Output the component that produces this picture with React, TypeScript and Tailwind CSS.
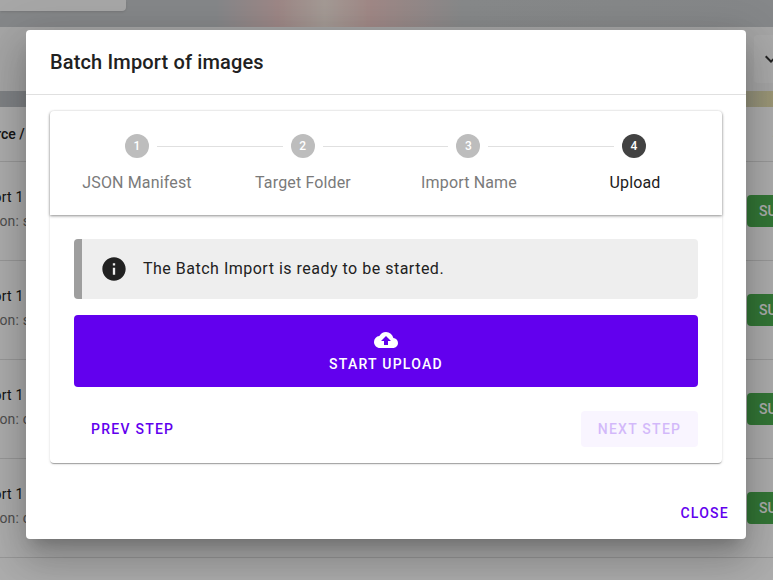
import { MdCloudUpload, MdInfo, MdKeyboardArrowDown } from "react-icons/md";

const STEPS = ["JSON Manifest", "Target Folder", "Import Name", "Upload"];
const ROWS = ["smart", "smart", "coco", "coco"];

function BackgroundPage() {
  return (
    <div className="flex h-[580px] flex-col overflow-hidden bg-white font-[Roboto,sans-serif]">
      <div className="h-[27px] shrink-0 bg-[linear-gradient(90deg,#c5c8ca_0%,#c5c8cb_28%,#e8c8c6_36%,#f2e4dc_42%,#ecc9c6_48%,#c7cacc_60%,#c5c8ca_100%)]">
        <div className="h-[11px] w-[126px] rounded-br bg-[#f7f7f7] shadow" />
      </div>
      <div className="flex h-[64px] shrink-0 items-center justify-end bg-[#f3f3f3] pr-0">
        <div className="flex h-[48px] w-[19px] items-center rounded-l bg-[#fafafa]">
          <MdKeyboardArrowDown className="ml-[5px] shrink-0 text-[24px] text-[#333]" />
        </div>
      </div>
      <div className="h-[16px] shrink-0 bg-[linear-gradient(90deg,#bcc0c4_0%,#c0c4c8_90%,#e6dfae_100%)]" />
      <div className="flex h-[55px] shrink-0 items-center justify-between border-b border-[#e0e0e0] text-sm font-medium text-[#212121]">
        <span className="ml-[-28px]">Source / Name</span>
        <span className="mr-[-40px]">Status</span>
      </div>
      {ROWS.map((name, i) => (
        <div key={i} className="flex h-[99px] shrink-0 items-center justify-between border-b border-[#e0e0e0]">
          <div className="ml-[-31px] flex flex-col gap-[4px] pb-[4px] text-sm">
            <span className="tracking-[0.2px] text-[#212121]">Import 1</span>
            <span className="ml-[-2px] tracking-[0.2px] text-[#757575]">Version: {name}</span>
          </div>
          <div className="ml-auto mr-[-40px] flex h-[32px] w-[66px] items-center rounded bg-[#4caf50] pl-[12px] text-sm font-medium text-white">
            SUCCESS
          </div>
        </div>
      ))}
    </div>
  );
}

function Stepper() {
  return (
    <div className="h-[104px] rounded-t bg-white shadow-[0_1px_3px_rgba(0,0,0,0.45)]">
      <div className="flex items-center pl-[75px] pr-[76px] pt-[23px]">
        {STEPS.map((_, i) => (
          <div key={i} className={i < 3 ? "flex flex-1 items-center" : "flex items-center"}>
            <div
              className={`flex h-6 w-6 shrink-0 items-center justify-center rounded-full text-xs font-medium text-white ${
                i === 3 ? "bg-[#424242]" : "bg-[#bdbdbd]"
              }`}
            >
              {i + 1}
            </div>
            {i < 3 && <div className="mx-2 h-px flex-1 bg-[#e0e0e0]" />}
          </div>
        ))}
      </div>
      <div className="mt-[13px] grid grid-cols-4 px-[4px] text-center text-base leading-6 tracking-[0.15px]">
        {STEPS.map((label, i) => (
          <span key={label} className={i === 3 ? "text-[#212121]" : "text-[#7a7a7a]"}>
            {label}
          </span>
        ))}
      </div>
    </div>
  );
}

export default function App() {
  return (
    <div className="relative h-[580px] w-[773px] overflow-hidden">
      <BackgroundPage />
      <div className="absolute inset-0 bg-black/[0.32]" />
      <div className="absolute left-[26px] top-[30px] flex h-[509px] w-[720px] flex-col rounded bg-white font-[Roboto,sans-serif] shadow-[0_11px_15px_-7px_rgba(0,0,0,0.2),0_24px_38px_3px_rgba(0,0,0,0.14),0_9px_46px_8px_rgba(0,0,0,0.12)]">
        <div className="flex h-[65px] shrink-0 items-center border-b border-[#e0e0e0] px-6">
          <h2 className="text-xl font-medium tracking-[0.15px] text-[#212121]">Batch Import of images</h2>
        </div>
        <div className="px-6 pt-4">
          <div className="rounded bg-white shadow-[0_2px_1px_-1px_rgba(0,0,0,0.2),0_1px_1px_0_rgba(0,0,0,0.14),0_1px_3px_0_rgba(0,0,0,0.12)]">
            <Stepper />
            <div className="flex flex-col px-6 pb-4 pt-6">
              <div className="flex h-[60px] items-center rounded border-l-8 border-[#9e9e9e] bg-[#eeeeee] pl-[18px]">
                <MdInfo className="text-[28px] text-[#212121]" />
                <span className="ml-[15px] text-base tracking-[0.5px] text-[#212121]">
                  The Batch Import is ready to be started.
                </span>
              </div>
              <button className="mt-4 flex h-[72px] flex-col items-center justify-center rounded bg-[#6200ee] text-sm font-medium tracking-[1.25px] text-white">
                <MdCloudUpload className="text-2xl" />
                <span className="mt-[2px]">START UPLOAD</span>
              </button>
              <div className="mt-6 flex items-center justify-between">
                <button className="h-9 rounded px-[17px] text-sm font-medium tracking-[1.25px] text-[#6200ee]">
                  PREV STEP
                </button>
                <button className="h-9 w-[117px] rounded bg-[#6200ee]/[0.04] text-sm font-medium tracking-[1.25px] text-[#6200ee]/[0.25]">
                  NEXT STEP
                </button>
              </div>
            </div>
          </div>
        </div>
        <div className="mt-auto flex justify-end pb-[8px] pr-[17px]">
          <button className="h-9 text-sm font-medium tracking-[1.25px] text-[#6200ee]">CLOSE</button>
        </div>
      </div>
    </div>
  );
}
